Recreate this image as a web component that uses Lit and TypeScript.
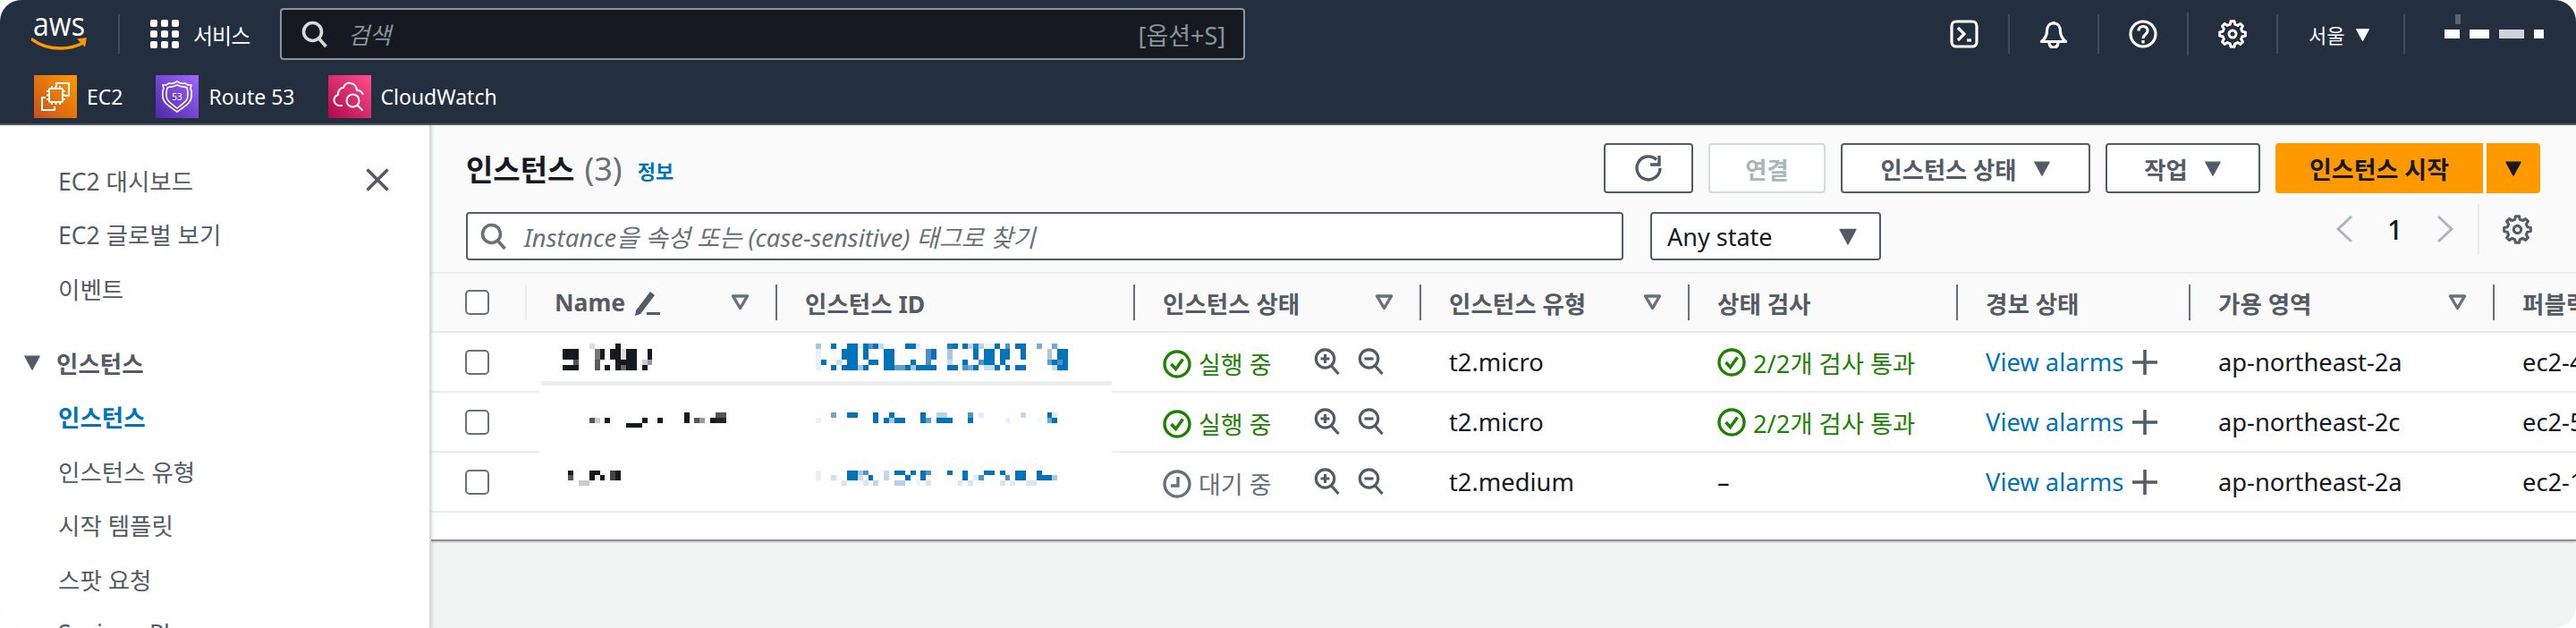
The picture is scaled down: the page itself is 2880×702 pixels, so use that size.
import { LitElement, html, css, svg } from "lit";
import { customElement } from "lit/decorators.js";

type R = [number, number, number, number, string];
const D = "#16191f";
const B = "#0073bb";
const nameRects: R[] = [
  [147,165,12,30,"#ddd"],[234,252,12,30,D],[57,111,30,66,D],[93,111,66,84,"#555"],[57,111,84,102,D],
  [165,183,30,66,"#777"],[165,183,66,102,"#5a5a5a"],[183,198,30,66,D],[198,216,84,102,D],
  [216,252,30,66,D],[252,270,30,66,"#ddd"],[270,306,30,66,D],[234,306,66,84,D],[234,252,84,102,D],
  [252,270,84,102,"#666"],[270,306,84,102,D],[342,357,30,66,D],[324,342,66,84,"#ccc"],[342,357,66,84,"#999"],[324,342,84,102,D],
  [147,165,261,279,"#555"],[165,183,261,279,"#ccc"],[198,216,261,279,D],[270,324,279,294,D],[324,342,261,279,D],
  [375,393,261,279,D],[465,483,243,279,D],[498,516,261,279,"#555"],[516,534,261,279,"#999"],[552,570,261,279,D],
  [570,606,243,261,"#555"],[570,606,261,279,"#222"],
  [75,93,438,453,D],[75,93,453,471,"#555"],[111,147,471,489,"#ccc"],[147,183,438,453,D],[147,165,453,471,D],
  [165,183,453,471,"#f0f0f0"],[183,198,453,471,D],[216,234,438,471,"#444"],[234,252,438,471,D],
];
const idRects: R[] = [
  [36,54,12,30,"#a5c8e0"],[87,105,12,30,B],[141,177,12,30,B],[177,195,12,30,"#e8f1f7"],[195,213,12,30,B],[213,228,12,30,"#4f94c8"],[228,246,12,30,B],[246,264,12,30,"#c8dcec"],[336,372,12,30,B],[372,387,12,30,"#e0ecf5"],[477,495,12,30,"#1f80c0"],[495,513,12,30,B],[528,546,12,30,B],[546,564,12,30,"#b8d4e8"],[564,582,12,30,"#1f80c0"],[582,600,12,30,"#b8d4e8"],[600,636,12,30,"#eef5fa"],[636,654,12,30,B],[672,687,12,30,"#4f94c8"],[705,741,12,30,B],[777,795,12,30,"#7aaed4"],[828,846,12,30,"#6fa8d2"],
  [36,54,30,66,"#e8f1f7"],[87,105,30,66,"#f4f9fc"],[123,177,30,66,B],[195,213,30,66,B],[264,300,30,66,B],[405,423,30,66,"#4f8fc8"],[423,441,30,66,B],[477,495,30,66,"#a5c8e0"],[564,582,30,66,B],[600,636,30,66,B],[654,687,30,66,B],[723,741,30,66,B],[813,828,30,66,"#a5c8e0"],[846,882,30,66,B],
  [36,54,66,84,"#e8f1f7"],[54,72,66,84,B],[105,123,66,84,"#c8dcec"],[141,177,66,84,B],[213,246,66,84,B],[264,300,66,84,B],[354,372,66,84,B],[405,423,66,84,"#4f8fc8"],[477,495,66,84,"#c8dcec"],[528,546,66,84,B],[582,600,66,84,"#4f94c8"],[600,636,66,84,B],[654,672,66,84,B],[672,687,66,84,"#eef5fa"],[813,828,66,84,"#5f9fd0"],[828,846,66,84,B],[846,864,66,84,"#4f8fc8"],[864,882,66,84,B],
  [36,54,84,102,"#e8f1f7"],[87,105,84,102,B],[123,177,84,102,B],[177,195,84,102,"#a5c8e0"],[195,213,84,102,B],[264,300,84,102,B],[300,336,84,102,"#5f9fd0"],[336,354,84,102,B],[354,372,84,102,"#a5c8e0"],[372,441,84,102,B],[477,513,84,102,B],[528,546,84,102,"#4f94c8"],[546,564,84,102,"#7aaed4"],[564,582,84,102,B],[600,636,84,102,"#c8dcec"],[636,654,84,102,B],[672,687,84,102,B],[705,741,84,102,B],[828,846,84,102,"#c8dcec"],[846,882,84,102,B],
  [87,105,243,261,"#6fa8d2"],[141,177,243,261,B],[228,246,243,261,B],[282,300,243,261,B],[387,405,243,261,B],[441,477,243,261,"#b8d4e8"],[546,564,243,261,"#4f94c8"],[582,600,243,261,"#e0ecf5"],[723,741,243,261,"#c0d8ec"],[813,828,243,261,B],[828,846,243,261,"#e0ecf5"],
  [36,54,261,279,"#e8f1f7"],[228,246,261,279,B],[264,282,261,279,B],[282,300,261,279,"#a5c8e0"],[300,336,261,279,B],[387,405,261,279,B],[405,423,261,279,"#5f9fd0"],[441,495,261,279,B],[546,564,261,279,B],[672,687,261,279,"#e8f1f7"],[777,795,261,279,"#f0f6fa"],[813,828,261,279,"#6fa8d2"],[828,846,261,279,B],
  [36,54,438,471,"#e8f1f7"],[141,177,438,471,B],[177,195,438,453,"#a5c8e0"],[195,213,438,453,"#4f94c8"],[264,282,438,471,"#c0d8ec"],[300,336,438,453,B],[354,372,438,453,B],[387,405,438,471,B],[405,423,438,453,"#4f94c8"],[477,495,438,453,B],[528,546,438,471,B],[600,636,438,453,B],[654,672,438,453,B],[705,741,438,471,B],[777,795,438,453,B],
  [87,105,453,471,"#d0e2f0"],[105,123,453,471,"#f4f9fc"],[177,195,453,471,"#c8dcec"],[213,228,453,471,B],[336,354,453,471,B],[405,423,453,471,"#f0f6fa"],[564,582,453,471,"#e0ecf5"],[582,600,453,471,"#4f94c8"],[672,687,453,471,"#4f94c8"],[777,828,453,471,B],[828,846,453,471,"#a5c8e0"],
  [123,141,471,489,"#d8e6f2"],[195,213,471,489,"#d8e6f2"],[228,246,471,489,"#c0d8ec"],[300,336,471,489,"#b8d0e8"],[372,387,471,489,"#f0f6fa"],[405,423,471,489,"#d8e6f2"],[513,528,471,489,"#d8e6f2"],[546,564,471,489,"#d8e6f2"],[654,672,471,489,"#d8e6f2"],[687,705,471,489,"#e0ecf5"],[741,777,471,489,"#d8e6f2"],
];

const mosaic = (rects: R[], w: number, rowIndex: number) => {
  const top = (372 + rowIndex * 67 - 380) * 3;
  return html`<svg class="mosaic" width=${w} height="65" viewBox="0 ${top} ${w * 3} 195" shape-rendering="crispEdges">
    ${rects.map((r) => svg`<rect x=${r[0]} y=${r[2]} width=${r[1] - r[0]} height=${r[3] - r[2]} fill=${r[4]}></rect>`)}
  </svg>`;
};

function gearPath(cx: number, cy: number, ro: number, ri: number): string {
  const pts: string[] = [];
  const n = 8;
  for (let i = 0; i < n; i++) {
    const a = (i / n) * Math.PI * 2 - Math.PI / 2;
    const s = Math.PI / n;
    const pairs: [number, number][] = [
      [ri, a - s * 0.62],
      [ro, a - s * 0.34],
      [ro, a + s * 0.34],
      [ri, a + s * 0.62],
    ];
    for (const [r, t] of pairs) pts.push(`${(cx + r * Math.cos(t)).toFixed(2)} ${(cy + r * Math.sin(t)).toFixed(2)}`);
  }
  return "M" + pts.join("L") + "Z";
}

const gear = (c: string, size: number) => html`<svg width=${size} height=${size} viewBox="0 0 32 32" fill="none" stroke=${c} stroke-width="3" stroke-linejoin="round">
  <path d=${gearPath(16, 16, 14.5, 11.2)}></path><circle cx="16" cy="16" r="4"></circle></svg>`;

const caret = (c: string, w = 18, h = 18) => html`<svg width=${w} height=${h} viewBox="0 0 16 16"><path d="M1.500 2.500h13L8 14.500z" fill=${c} stroke=${c} stroke-width="1" stroke-linejoin="round"></path></svg>`;

const sortIcon = html`<svg class="sort" width="21" height="18" viewBox="0 0 21 18" fill="none"><path d="M2.500 2h16L10.500 15.500z" stroke="#687078" stroke-width="3.400" stroke-linejoin="round"></path></svg>`;

const magnifier = (sign: "+" | "-") => html`<svg width="30" height="30" viewBox="0 0 30 30" fill="none" stroke="#545b64" stroke-width="3.200">
  <circle cx="12.500" cy="12" r="10.200"></circle><path d="M19.500 20l8 9"></path>
  <path d=${sign === "+" ? "M7.500 12h10M12.500 7v10" : "M7.500 12h10"}></path></svg>`;

const okIcon = html`<svg class="st" width="32" height="32" viewBox="0 0 32 32" fill="none" stroke="#1d8102" stroke-width="3.400">
  <circle cx="16" cy="16" r="14"></circle><path d="M9.500 16l5 5.500 8-11" stroke-width="3.600"></path></svg>`;

const pendingIcon = html`<svg class="st" width="32" height="32" viewBox="0 0 32 32" fill="none" stroke="#687078" stroke-width="3.400">
  <circle cx="16" cy="16" r="14"></circle><path d="M17 8v10H9"></path></svg>`;

const cols: { t: string; sort?: boolean; light?: boolean; pencil?: boolean }[] = [
  { t: "Name", sort: true, light: true, pencil: true },
  { t: "인스턴스 ID" },
  { t: "인스턴스 상태", sort: true },
  { t: "인스턴스 유형", sort: true },
  { t: "상태 검사" },
  { t: "경보 상태" },
  { t: "가용 영역", sort: true },
  { t: "퍼블릭 IPv4 DNS" },
];

const rows = [
  { ok: true, state: "실행 중", type: "t2.micro", check: "2/2개 검사 통과", az: "ap-northeast-2a", dns: "ec2-43-201-1-1" },
  { ok: true, state: "실행 중", type: "t2.micro", check: "2/2개 검사 통과", az: "ap-northeast-2c", dns: "ec2-52-78-1-1" },
  { ok: false, state: "대기 중", type: "t2.medium", check: "", az: "ap-northeast-2a", dns: "ec2-13-125-1-1" },
];

@customElement("app-root")
export class AppRoot extends LitElement {
  static styles = css`
    :host {
      display: block; width: 2880px; height: 702px; overflow: hidden; border-radius: 24px; background: #fff;
      font-family: "Noto Sans", "Noto Sans CJK KR", sans-serif; font-size: 27.300px; color: #16191f;
    }
    * { box-sizing: border-box; }
    svg { display: block; flex: none; }
    .nav { height: 140px; background: #232f3e; border-bottom: 2px solid #545b64; color: #fff; }
    .nav-top { height: 76px; display: flex; align-items: center; padding-left: 35px; }
    .logo { width: 64px; height: 54px; margin-top: -12px; }
    .logo text { font-family: "Open Sans", sans-serif; font-size: 37px; fill: #fff; }
    .vsep { width: 2px; height: 44px; background: #414b59; margin-left: 33px; }
    .grid9 { display: grid; grid-template-columns: repeat(3, 8px); gap: 4px; margin-left: 34px; margin-top: -1px; }
    .grid9 i { width: 8px; height: 8px; background: #fff; border-radius: 2px; display: block; }
    .svc { margin-left: 16px; font-size: 24px; letter-spacing: -1px; }
    .search { margin-left: 34px; width: 1079px; height: 58px; background: #16191f; border: 2px solid #879596; border-radius: 4px; display: flex; align-items: center; padding: 0 20px 0 22px; }
    .search em { color: #879596; margin-left: 22px; font-size: 26px; }
    .search .kbd { margin-left: auto; color: #879596; font-size: 27px; }
    .right { margin-left: auto; display: flex; align-items: center; height: 48px; }
    .ni { width: 100px; height: 44px; display: flex; align-items: center; justify-content: center; border-right: 2px solid #414b59; }
    .ni.tall { height: 48px; }
    .region { width: 142px; height: 44px; display: flex; align-items: center; padding-left: 34px; gap: 12px; font-size: 22px; border-right: 2px solid #414b59; }
    .user { width: 191px; padding-left: 44px; height: 44px; position: relative; display: flex; align-items: center; }
    .user b { display: block; height: 10px; background: #fff; margin-right: 11px; }
    .user b.s { position: absolute; left: 56px; top: 0; height: 11px; width: 6px; margin: 0; background: #5d6572; }
    .nav-bot { height: 62px; display: flex; align-items: flex-start; padding: 8px 0 0 38px; }
    .fav { display: flex; align-items: center; margin-right: 37px; height: 48px; gap: 11px; font-size: 23px; }
    .fav svg text { font-family: "Noto Sans", sans-serif; font-size: 10px; fill: #fff; text-anchor: middle; }
    .body { display: flex; height: 562px; }
    .side { width: 482px; flex: none; background: #fff; border-right: 2px solid #d5dbdb; box-shadow: 1px 0 3px rgba(0,0,0,.15); padding-top: 31px; color: #545b64; font-size: 26.500px; position: relative; z-index: 2; }
    .si { height: 60.500px; display: flex; align-items: center; padding-left: 65px; }
    .si:first-child { padding-right: 45px; justify-content: space-between; }
    .si.head { margin-top: 22.500px; font-weight: 700; padding-left: 26px; gap: 17px; }
    .si.active { color: #0073bb; font-weight: 700; }
    .main { flex: 1; min-width: 0; display: flex; flex-direction: column; background: #f2f3f3; overflow: hidden; position: relative; }
    .tools { height: 164px; flex: none; background: #fafafa; padding: 20px 40px 0 39px; }
    .tr1 { display: flex; align-items: center; height: 56px; }
    h1 { margin: 0; font-size: 33px; font-weight: 700; }
    .cnt { color: #687078; font-weight: 400; font-size: 36px; margin-left: 11px; }
    .info { color: #0073bb; font-weight: 700; font-size: 22px; margin-left: 17px; margin-top: 4px; }
    .btns { margin-left: auto; display: flex; gap: 17px; }
    .btn { height: 56px; border: 2px solid #545b64; border-radius: 4px; background: #fff; color: #545b64; font-weight: 700; font-size: 26.300px; display: flex; align-items: center; justify-content: center; gap: 18px; }
    .btn.dis { border-color: #d5dbdb; color: #aab7b8; }
    .btn.pri { background: #f90; border: 0; color: #16191f; font-size: 27px; }
    .split { display: flex; gap: 4px; }
    .split .btn:first-child { border-radius: 4px 0 0 4px; }
    .split .btn:last-child { border-radius: 0 4px 4px 0; }
    .tr2 { display: flex; align-items: flex-start; margin-top: 21px; height: 54px; }
    .filter { width: 1294px; height: 54px; border: 2px solid #545b64; border-radius: 4px; background: #fff; display: flex; align-items: center; padding: 0 14px; }
    .filter em { color: #687078; margin-left: 19px; font-size: 27.400px; }
    .select { width: 258px; height: 54px; margin-left: 30px; border: 2px solid #545b64; border-radius: 4px; background: #fff; display: flex; align-items: center; justify-content: space-between; padding: 0 24px 0 17px; font-size: 27px; }
    .pager { margin-left: auto; margin-right: 9px; margin-top: -9px; height: 56px; display: flex; align-items: center; font-size: 30px; font-weight: 500; }
    .pager .num { width: 93px; text-align: center; }
    .pager .cog { margin-left: 26px; height: 56px; border-left: 2px solid #eaeded; padding-left: 26px; display: flex; align-items: center; }
    .t-row { display: grid; grid-template-columns: 105px 280px 400px 320px 300px 300px 260px 340px 400px; width: 2405px; }
    .thead { background: #fafafa; border-top: 2px solid #eaeded; border-bottom: 2px solid #eaeded; height: 68px; flex: none; align-items: center; color: #545b64; font-weight: 700; font-size: 26.500px; }
    .th { height: 40px; border-left: 2px solid #687078; padding: 0 29px 0 31px; display: flex; align-items: center; white-space: nowrap; }
    .th.light { border-left-color: #eaeded; }
    .th .sort { margin-left: auto; }
    .th .pen { margin-left: 10px; }
    .cb { width: 27px; height: 28px; margin-left: 38px; border: 2px solid #687078; border-radius: 5px; background: #fff; }
    .tbody { background: #fff; height: 233px; flex: none; position: relative; border-bottom: 2px solid #879596; box-shadow: 0 1px 2px rgba(0,0,0,.2); }
    .tr { height: 67px; border-bottom: 2px solid #eaeded; align-items: center; }
    .td { padding-left: 33px; white-space: nowrap; display: flex; align-items: center; height: 65px; }
    .td.raw { padding: 0; position: relative; z-index: 1; }
    .mosaic { margin-left: 23px; }
    .idc .mosaic { margin-left: 33px; }
    .td.stc { padding-top: 4px; }
    .patch { position: absolute; left: 121px; top: 54px; width: 640px; height: 80px; background: #fff; }
    .patch::before { content: ""; display: block; height: 5px; margin-left: 3px; background: #eaeded; }
    .green { color: #1d8102; }
    .gray { color: #687078; }
    .st { margin-right: 8px; }
    .lab { width: 129px; font-size: 27px; }
    .mag { display: flex; gap: 19px; margin-top: -6px; }
    a { color: #0073bb; text-decoration: none; }
    .plus { margin-left: 10px; }
  `;

  render() {
    return html`
      <div class="nav">
        <div class="nav-top">
          <svg class="logo" viewBox="0 -10 64 54">
            <text x="2" y="25" textLength="58" lengthAdjust="spacingAndGlyphs">aws</text>
            <path d="M1 29c9 7 21 10 32 10 8 0 17-2 25-6" fill="none" stroke="#f90" stroke-width="3.400" stroke-linecap="round"></path>
            <path d="M51 28.500l11-1.500-2 10.500z" fill="#f90"></path>
          </svg>
          <div class="vsep"></div>
          <div class="grid9">${Array.from({ length: 9 }, () => html`<i></i>`)}</div>
          <div class="svc">서비스</div>
          <div class="search">
            <svg width="30" height="30" viewBox="0 0 30 30" fill="none" stroke="#d5dbdb" stroke-width="3.600"><circle cx="12.500" cy="12.500" r="10"></circle><path d="M19.500 20l8 9"></path></svg>
            <em>검색</em>
            <span class="kbd">[옵션+S]</span>
          </div>
          <div class="right">
            <div class="ni">
              <svg width="32" height="32" viewBox="0 0 32 32" fill="none" stroke="#fff" stroke-width="3.200"><rect x="2" y="2" width="28" height="28" rx="5"></rect><path d="M9 9l7 7-7 7"></path><path d="M19 23h5"></path></svg>
            </div>
            <div class="ni">
              <svg width="32" height="32" viewBox="0 0 32 32" fill="none" stroke="#fff" stroke-width="3.200" stroke-linejoin="round"><path d="M16 2v2M16 4c-5 0-7.500 4-7.500 9 0 5-2 8-6 11.500h27c-4-3.500-6-6.500-6-11.500 0-5-2.500-9-7.500-9z"></path><path d="M11 25c0 4 2 6 5 6s5-2 5-6"></path></svg>
            </div>
            <div class="ni tall">
              <svg width="32" height="32" viewBox="0 0 32 32" fill="none" stroke="#fff" stroke-width="3.200"><circle cx="16" cy="16" r="14"></circle><path d="M11 12.500c0-3 2-5 5-5s5 2 5 5c0 4-5 4-5 8.500"></path><path d="M16 23v3.500"></path></svg>
            </div>
            <div class="ni">${gear("#fff", 32)}</div>
            <div class="region">서울 ${caret("#fff", 17, 17)}</div>
            <div class="user"><b class="s"></b><b style="width:17px"></b><b style="width:22px"></b><b style="width:28px;background:#cfd2d6"></b><b style="width:11px"></b></div>
          </div>
        </div>
        <div class="nav-bot">
          <div class="fav">
            <svg width="48" height="48" viewBox="0 0 48 48" fill="none">
              <defs><linearGradient id="g1" x1="0" y1="1" x2="1" y2="0"><stop offset="0" stop-color="#c8511b"></stop><stop offset="1" stop-color="#f90"></stop></linearGradient></defs>
              <rect width="48" height="48" fill="url(#g1)"></rect>
              <g stroke="#fff" stroke-width="2" stroke-linejoin="round">
                <path d="M25 13V9h14v14h-4"></path><path d="M13 25H9v14h14v-4"></path>
                <rect x="17" y="15" width="15" height="15" rx="1"></rect>
                <path d="M20 12v3M24.500 12v3M29 12v3M20 30v3M24.500 30v3M29 30v3M14 18h3M14 22.500h3M14 27h3M32 18h3M32 22.500h3M32 27h3"></path>
              </g>
            </svg>EC2
          </div>
          <div class="fav">
            <svg width="48" height="48" viewBox="0 0 48 48" fill="none">
              <defs><linearGradient id="g2" x1="0" y1="1" x2="1" y2="0"><stop offset="0" stop-color="#4d27a8"></stop><stop offset="1" stop-color="#a166ff"></stop></linearGradient></defs>
              <rect width="48" height="48" fill="url(#g2)"></rect>
              <g stroke="#fff" stroke-width="1.600" stroke-linejoin="round">
                <path d="M24 7c3 2 6 3 9 2l3 2 4 0-1 4c2 3 1 6 1 9 0 7-8 11-16 17-8-6-16-10-16-17 0-3-1-6 1-9l-1-4 4 0 3-2c3 1 6 0 9-2z"></path>
                <path d="M24 11c3 1.500 5 2.500 8 2l3 1c1 3 1 6 1 9 0 6-6 9-12 14-6-5-12-8-12-14 0-3 0-6 1-9l3-1c3 .5 5-.5 8-2z"></path>
              </g>
              <text x="24" y="27.500" stroke="none">53</text>
            </svg>Route 53
          </div>
          <div class="fav">
            <svg width="48" height="48" viewBox="0 0 48 48" fill="none">
              <defs><linearGradient id="g3" x1="0" y1="1" x2="1" y2="0"><stop offset="0" stop-color="#b0084d"></stop><stop offset="1" stop-color="#ff4f8b"></stop></linearGradient></defs>
              <rect width="48" height="48" fill="url(#g3)"></rect>
              <g stroke="#fff" stroke-width="2" stroke-linejoin="round">
                <path d="M16 34h-3c-4 0-6.500-3-6.500-6 0-3 1.500-5 4.500-6-.5-5 3-8 6-8 1.500-4 5-5.500 8-5 4 .5 7 4 7 8 3 0 6 2 7 5"></path>
                <circle cx="27.500" cy="28.500" r="7"></circle><path d="M32.500 33.500l6 6"></path>
              </g>
            </svg>CloudWatch
          </div>
        </div>
      </div>
      <div class="body">
        <div class="side">
          <div class="si">EC2 대시보드
            <svg width="26" height="26" viewBox="0 0 26 26" stroke="#545b64" stroke-width="3.600"><path d="M1.500 1.500l23 23M24.500 1.500l-23 23"></path></svg>
          </div>
          <div class="si">EC2 글로벌 보기</div>
          <div class="si">이벤트</div>
          <div class="si head">${caret("#545b64", 20, 20)}인스턴스</div>
          <div class="si active">인스턴스</div>
          <div class="si">인스턴스 유형</div>
          <div class="si">시작 템플릿</div>
          <div class="si">스팟 요청</div>
          <div class="si">Savings Plans</div>
        </div>
        <div class="main">
          <div class="tools">
            <div class="tr1">
              <h1>인스턴스</h1><span class="cnt">(3)</span><span class="info">정보</span>
              <div class="btns">
                <div class="btn" style="width:100px">
                  <svg width="34" height="34" viewBox="0 0 34 34" fill="none" stroke="#545b64" stroke-width="3.400"><path d="M26 7.500A13 13 0 1 0 30 17"></path><path d="M29 3v10H19"></path></svg>
                </div>
                <div class="btn dis" style="width:131px">연결</div>
                <div class="btn" style="width:279px">인스턴스 상태 ${caret("#545b64", 20, 20)}</div>
                <div class="btn" style="width:173px">작업 ${caret("#545b64", 20, 20)}</div>
                <div class="split">
                  <div class="btn pri" style="width:232px">인스턴스 시작</div>
                  <div class="btn pri" style="width:60px">${caret("#16191f", 20, 20)}</div>
                </div>
              </div>
            </div>
            <div class="tr2">
              <div class="filter">
                <svg width="30" height="30" viewBox="0 0 30 30" fill="none" stroke="#687078" stroke-width="3.600"><circle cx="12.500" cy="12.500" r="10"></circle><path d="M19.500 20l8 9"></path></svg>
                <em>Instance을 속성 또는 (case-sensitive) 태그로 찾기</em>
              </div>
              <div class="select">Any state ${caret("#545b64", 22, 22)}</div>
              <div class="pager">
                <svg width="20" height="32" viewBox="0 0 20 32" fill="none" stroke="#aab7b8" stroke-width="3"><path d="M18 2L3 16l15 14"></path></svg>
                <span class="num">1</span>
                <svg width="20" height="32" viewBox="0 0 20 32" fill="none" stroke="#aab7b8" stroke-width="3"><path d="M2 2l15 14L2 30"></path></svg>
                <div class="cog">${gear("#545b64", 33)}</div>
              </div>
            </div>
          </div>
          <div class="t-row thead">
            <div><div class="cb"></div></div>
            ${cols.map((c) => html`<div class="th ${c.light ? "light" : ""}">
              ${c.t}
              ${c.pencil ? html`<svg class="pen" width="29" height="29" viewBox="0 0 29 29" fill="#545b64"><path d="M2 23L18 2l5 4L7 27l-6 2z"></path><rect x="14" y="25" width="15" height="3"></rect></svg>` : ""}
              ${c.sort ? sortIcon : ""}
            </div>`)}
          </div>
          <div class="tbody">
            <div class="patch"></div>
            ${rows.map((r, i) => html`<div class="t-row tr">
              <div><div class="cb"></div></div>
              <div class="td raw">${mosaic(nameRects, 240, i)}</div>
              <div class="td raw idc">${mosaic(idRects, 300, i)}</div>
              <div class="td stc ${r.ok ? "green" : "gray"}">
                ${r.ok ? okIcon : pendingIcon}
                <span class="lab">${r.state}</span>
                <span class="mag">${magnifier("+")}${magnifier("-")}</span>
              </div>
              <div class="td">${r.type}</div>
              <div class="td green">${r.check ? html`${okIcon}${r.check}` : html`<span style="color:#16191f">–</span>`}</div>
              <div class="td"><a>View alarms</a>
                <svg class="plus" width="28" height="28" viewBox="0 0 28 28" stroke="#545b64" stroke-width="3.600"><path d="M0 14h28M14 0v28"></path></svg>
              </div>
              <div class="td">${r.az}</div>
              <div class="td">${r.dns}</div>
            </div>`)}
          </div>
        </div>
      </div>
    `;
  }
}
